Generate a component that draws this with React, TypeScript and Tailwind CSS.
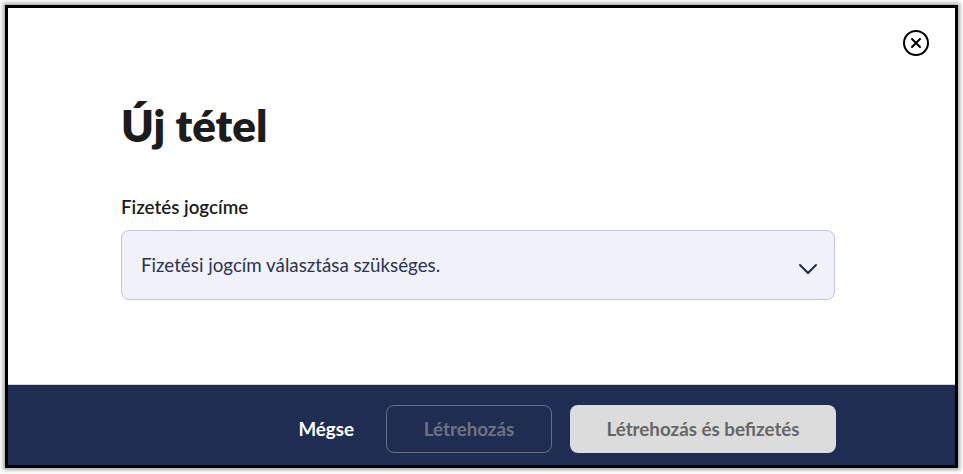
export default function App() {
    return (
        <div className="w-[963px] h-[474px] bg-white pt-[5px] pl-[5px]" style={{ fontFamily: "Lato, 'Noto Sans', sans-serif" }}>
            <div className="w-[953px] h-[463px] border-[3px] border-black shadow-[0_0_4px_2px_rgba(0,0,0,0.35)] flex flex-col bg-white">
                <div className="relative flex-1 pl-[113px] pr-[120px] pt-[93px]">
                    <button className="absolute top-[22px] right-[26px] w-[26px] h-[26px] rounded-full border-2 border-black flex items-center justify-center">
                        <svg width="12" height="12" viewBox="0 0 12 12" fill="none" stroke="black" strokeWidth="2" strokeLinecap="round">
                            <path d="M2 2 L10 10 M10 2 L2 10" />
                        </svg>
                    </button>
                    <h1 className="text-[44px] font-extrabold text-[#1c1c1c] leading-[48px]">Új tétel</h1>
                    <div className="mt-[46px] text-[18.75px] font-semibold text-[#1c1c1c] leading-6">Fizetés jogcíme</div>
                    <div className="mt-[11px] h-[70px] rounded-lg border border-[#c3c5dc] bg-[#f1f1fa] flex items-center justify-between pl-[19px] pr-[16px]">
                        <span className="text-[18.75px] text-[#2b3350]">Fizetési jogcím választása szükséges.</span>
                        <svg width="20" height="12" viewBox="0 0 20 12" fill="none" stroke="#1f2a48" strokeWidth="2" strokeLinecap="round" strokeLinejoin="round" className="mt-[8px]">
                            <path d="M2 2 L10 10 L18 2" />
                        </svg>
                    </div>
                </div>
                <div className="h-[81px] bg-[#1f2d52] border-t border-[#d0d3dc] flex items-start justify-end pt-[20px] pr-[119px] gap-[18px]">
                    <button className="h-[48px] text-white font-bold text-[18.75px] px-[14px]">Mégse</button>
                    <button className="w-[166px] h-[48px] rounded-lg border border-[#6a6e7e] text-[#6f7282] font-bold text-[18.75px]">Létrehozás</button>
                    <button className="w-[266px] h-[48px] rounded-lg bg-[#dcdcdc] text-[#666666] font-bold text-[18.75px]">Létrehozás és befizetés</button>
                </div>
            </div>
        </div>
    );
}
